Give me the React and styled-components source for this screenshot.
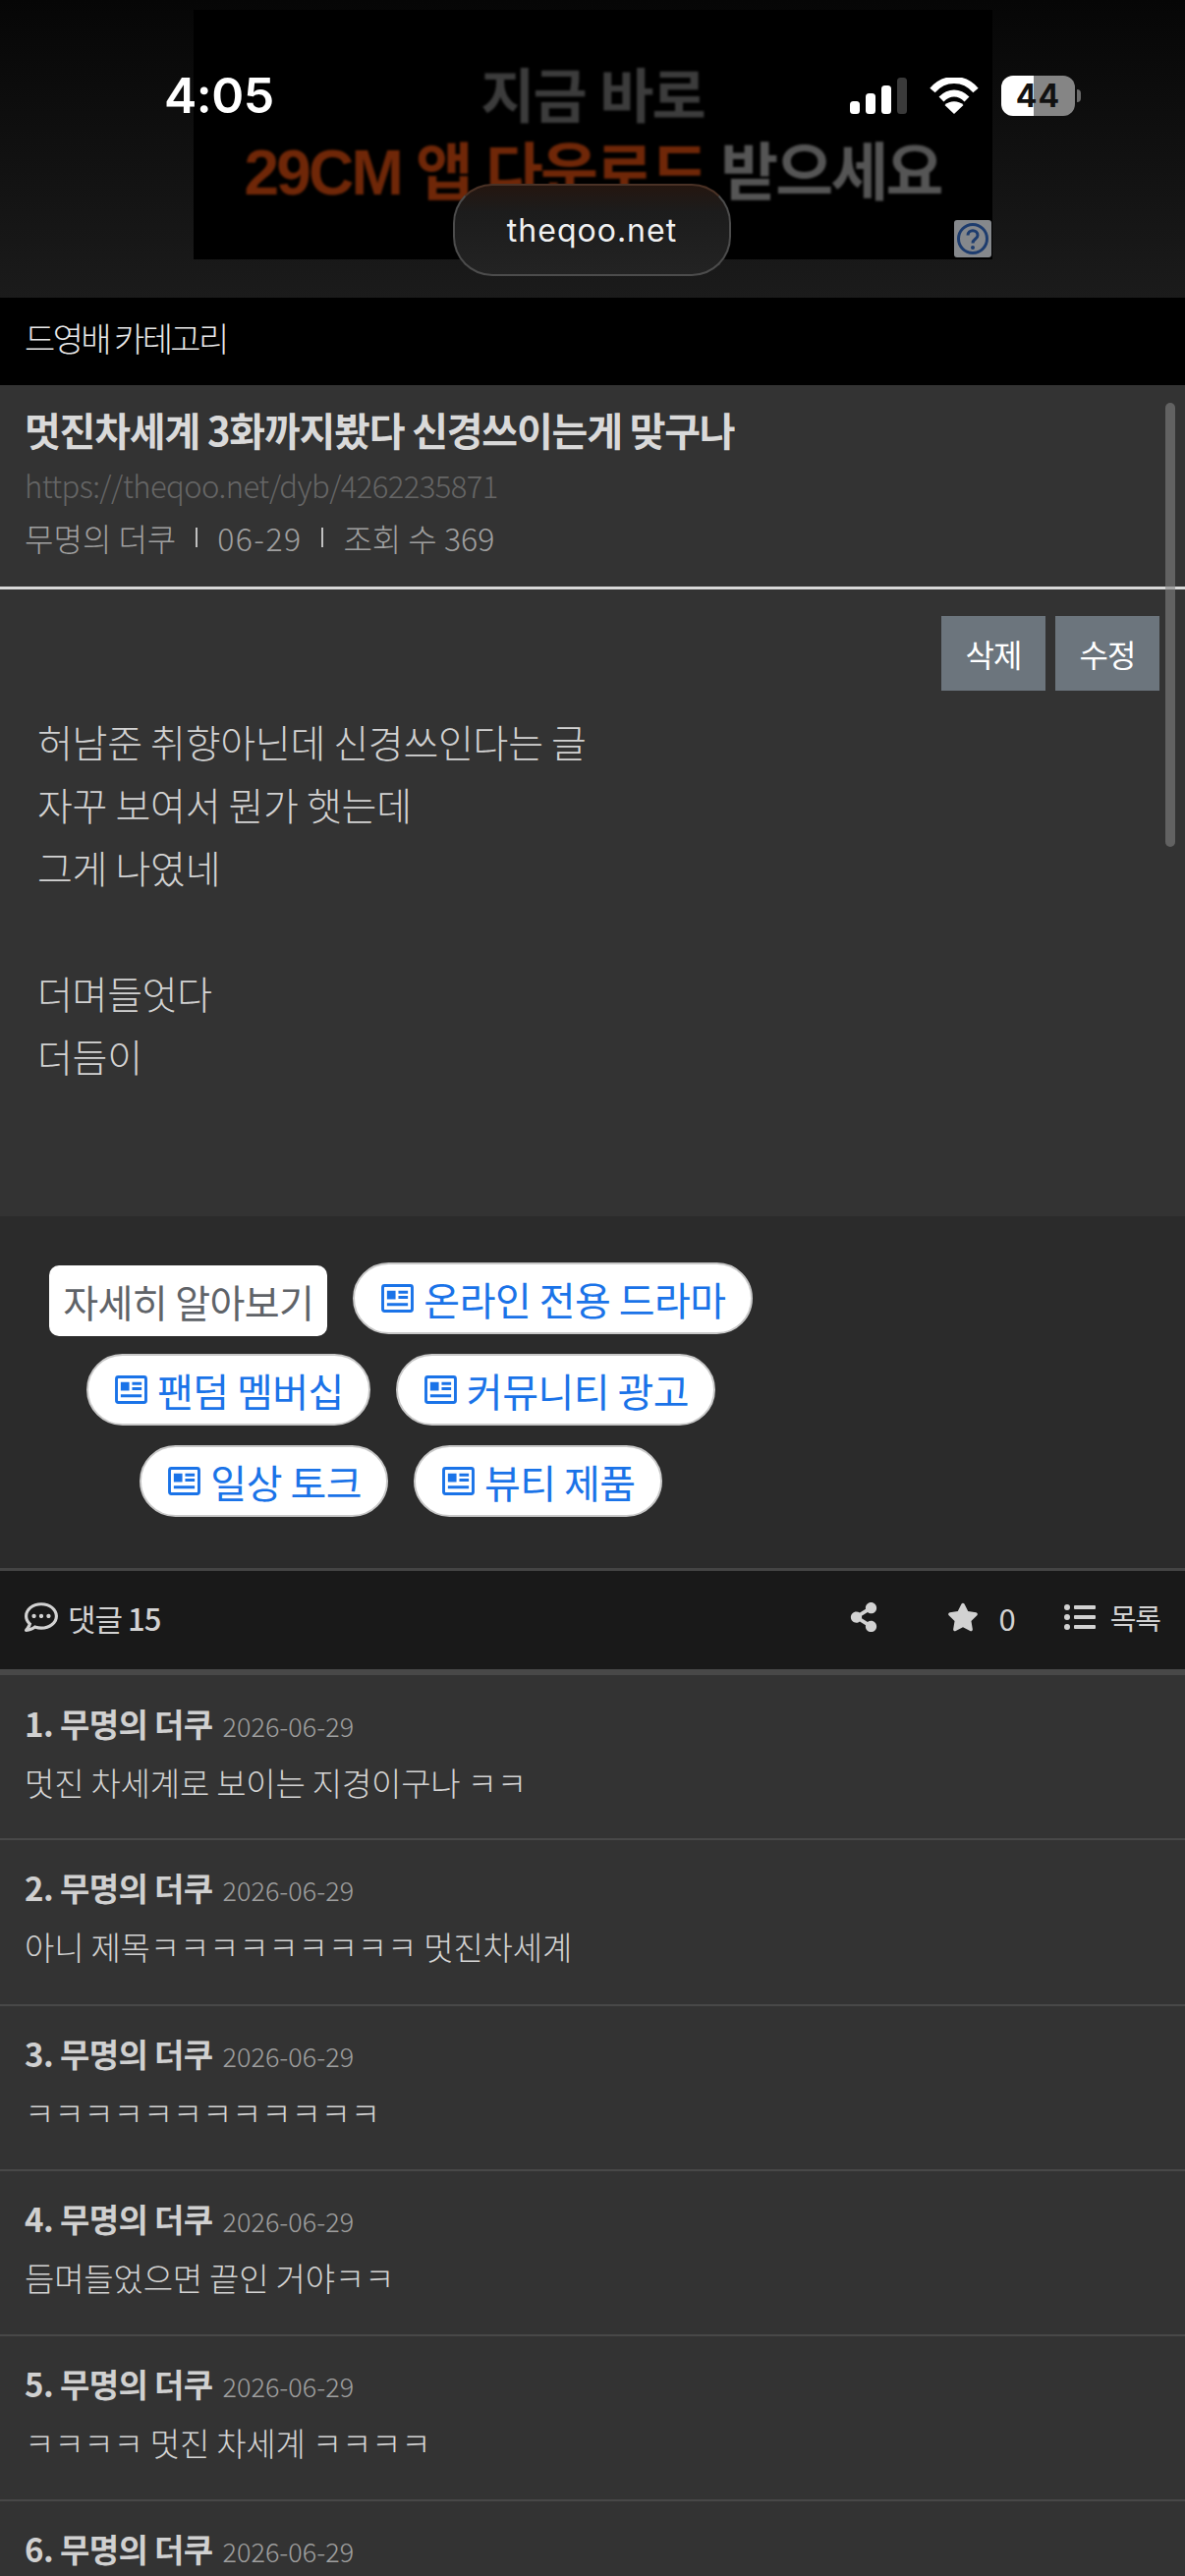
import styled, { createGlobalStyle } from "styled-components";
import { FaRegCommentDots, FaShareAlt, FaStar, FaListUl } from "react-icons/fa";

const GlobalStyle = createGlobalStyle`
  html, body {
    margin: 0;
    padding: 0;
    background: #333;
  }
  body {
    font-family: "Noto Sans CJK KR", "Noto Sans", sans-serif;
  }
`;

const Page = styled.div`
  position: relative;
  width: 1206px;
  height: 2622px;
  overflow: hidden;
  background: #333;
  color: #d6d6d6;
`;

const AdArea = styled.div`
  height: 303px;
  box-sizing: border-box;
  padding-top: 10px;
  display: flex;
  justify-content: center;
  background: linear-gradient(#060606, #1b1b1b);
`;

const Ad = styled.div`
  position: relative;
  width: 813px;
  height: 254px;
  box-sizing: border-box;
  padding-top: 52px;
  background: #000;
  text-align: center;
  font-family: "Liberation Sans", "Noto Sans CJK KR", sans-serif;
  font-weight: 700;
  line-height: 76px;
  color: #3c3c3c;
`;

const AdLine = styled.div`
  font-size: ${(p) => p.$size}px;
  letter-spacing: ${(p) => p.$spacing}px;
  filter: blur(0.8px);
`;

const AdAccent = styled.span`
  color: #6f2708;
`;

const AdGray = styled.span`
  color: #555;
`;

const AdHelp = styled.div`
  position: absolute;
  right: 1px;
  bottom: 2px;
  width: 38px;
  height: 38px;
  display: flex;
  align-items: center;
  justify-content: center;
  background: #85888c;
  border-radius: 3px;
`;

const StatusBar = styled.div`
  position: absolute;
  top: 0;
  left: 0;
  width: 100%;
  height: 130px;
`;

const Clock = styled.div`
  position: absolute;
  left: 167px;
  top: 67px;
  font-family: Inter, "Liberation Sans", sans-serif;
  font-size: 50px;
  line-height: 60px;
  font-weight: 600;
  letter-spacing: -0.5px;
  color: #fff;
`;

const StatusIcons = styled.div`
  position: absolute;
  left: 865px;
  top: 77px;
  display: flex;
  align-items: center;
  gap: 23px;
  height: 41px;
`;

const Battery = styled.div`
  position: relative;
  width: 75px;
  height: 41px;
  border-radius: 12px;
  overflow: hidden;
  display: flex;
  align-items: center;
  justify-content: center;
  background: linear-gradient(90deg, #fff 44%, #858585 44%);
  font-family: Inter, "Liberation Sans", sans-serif;
  font-size: 32px;
  font-weight: 700;
  letter-spacing: 1px;
  color: #111;
`;

const BatteryTip = styled.div`
  position: absolute;
  left: 1096px;
  top: 91px;
  width: 4px;
  height: 13px;
  border-radius: 0 4px 4px 0;
  background: #6a6a6a;
`;

const UrlPill = styled.div`
  position: absolute;
  left: 461px;
  top: 187px;
  width: 283px;
  height: 94px;
  box-sizing: border-box;
  display: flex;
  align-items: center;
  justify-content: center;
  border-radius: 40px;
  border: 2px solid #4c4c4c;
  border-top-color: #4a3226;
  background: linear-gradient(#241610, #1c1c1c 30%, #232323);
  font-family: Inter, "Liberation Sans", sans-serif;
  font-size: 32px;
  letter-spacing: 1px;
  color: #f0f0f0;
`;

const CategoryBar = styled.div`
  height: 89px;
  box-sizing: border-box;
  padding: 0 0 8px 25px;
  display: flex;
  align-items: center;
  background: #000;
  font-size: 34px;
  font-weight: 300;
  letter-spacing: -2.6px;
  color: #e8e8e8;
`;

const PostHeader = styled.header`
  height: 208px;
  box-sizing: border-box;
  padding: 16px 25px 0;
  border-bottom: 3px solid #d8d8d8;
`;

const PostTitle = styled.h1`
  margin: 0;
  font-size: 40px;
  line-height: 58px;
  font-weight: 700;
  letter-spacing: -1.2px;
  color: #d9d9d9;
`;

const PostUrl = styled.div`
  font-size: 31px;
  font-weight: 300;
  line-height: 56px;
  letter-spacing: -0.6px;
  color: #666;
`;

const PostMeta = styled.div`
  display: flex;
  align-items: center;
  font-size: 32px;
  font-weight: 300;
  line-height: 50px;
  letter-spacing: 0;
  color: #a0a0a0;
`;

const MetaNumber = styled.span`
  letter-spacing: 1.4px;
`;

const MetaDivider = styled.span`
  width: 2px;
  height: 20px;
  margin: 0 20px;
  background: #c0c0c0;
`;

const PostBody = styled.section`
  height: 638px;
  box-sizing: border-box;
  padding: 27px 26px 0 38px;
`;

const PostActions = styled.div`
  display: flex;
  justify-content: flex-end;
  gap: 10px;
  margin-bottom: 19px;
`;

const ActionButton = styled.div`
  width: 106px;
  height: 76px;
  display: flex;
  align-items: center;
  justify-content: center;
  background: #6c757d;
  font-size: 32px;
  letter-spacing: -1px;
  color: #fff;
`;

const BodyLine = styled.p`
  margin: 0;
  height: 64px;
  font-size: 39px;
  font-weight: 300;
  line-height: 64px;
  letter-spacing: -0.3px;
  color: #d2d2d2;
`;

const Recommend = styled.section`
  height: 358px;
  box-sizing: border-box;
  padding: 47px 390px 0 0;
  display: flex;
  flex-direction: column;
  row-gap: 20px;
  background: #2b2b2b;
`;

const ChipRow = styled.div`
  display: flex;
  justify-content: center;
  align-items: center;
  gap: 26px;
  height: 73px;
`;

const LabelChip = styled.div`
  width: 283px;
  height: 72px;
  margin-top: 5px;
  display: flex;
  align-items: center;
  justify-content: center;
  background: #fff;
  border-radius: 10px;
  font-size: 39px;
  letter-spacing: -0.6px;
  color: #5f6368;
`;

const LinkChip = styled.div`
  height: 73px;
  box-sizing: border-box;
  padding: 0 25px 0 27px;
  display: flex;
  align-items: center;
  gap: 10px;
  background: #fff;
  border: 2px solid #c8c8c8;
  border-radius: 37px;
  font-size: 40px;
  letter-spacing: -0.5px;
  color: #1a73e8;
`;

const ToolBar = styled.div`
  height: 103px;
  box-sizing: border-box;
  padding: 0 25px 6px;
  display: flex;
  align-items: center;
  justify-content: space-between;
  border-top: 3px solid #444;
  background: #191919;
  font-size: 31px;
  color: #d2d2d2;
`;

const ToolGroup = styled.div`
  display: flex;
  align-items: center;
`;

const ToolItem = styled.div`
  display: flex;
  align-items: center;
  gap: ${(p) => p.$gap || 10}px;
  margin-right: ${(p) => p.$after || 0}px;
  font-size: ${(p) => p.$size || 31}px;
  letter-spacing: -1px;
`;

const CommentCount = styled.strong`
  font-weight: 500;
`;

const CommentRow = styled.article`
  height: ${(p) => (p.$first ? 172.4 : 168.2)}px;
  box-sizing: border-box;
  padding: ${(p) => (p.$first ? 23 : 22)}px 25px 0;
  border-top: ${(p) => (p.$first ? "6px solid #484848" : "2px solid #484848")};
`;

const CommentHead = styled.div`
  display: flex;
  align-items: baseline;
  gap: 10px;
  height: 52px;
  line-height: 52px;
`;

const CommentAuthor = styled.span`
  font-size: 33px;
  font-weight: 700;
  letter-spacing: -0.6px;
  color: #d0d0d0;
`;

const CommentDate = styled.span`
  font-size: 27px;
  font-weight: 300;
  color: #a0a0a0;
`;

const CommentText = styled.div`
  margin-top: 10px;
  font-size: 33px;
  font-weight: 300;
  line-height: 48px;
  letter-spacing: -0.2px;
  color: #d4d4d4;
`;

const Scrollbar = styled.div`
  position: absolute;
  left: 1186px;
  top: 410px;
  width: 10px;
  height: 452px;
  border-radius: 5px;
  background: rgba(130, 130, 130, 0.6);
`;

const comments = [
  "멋진 차세계로 보이는 지경이구나 ㅋㅋ",
  "아니 제목ㅋㅋㅋㅋㅋㅋㅋㅋㅋ 멋진차세계",
  "ㅋㅋㅋㅋㅋㅋㅋㅋㅋㅋㅋㅋ",
  "듬며들었으면 끝인 거야ㅋㅋ",
  "ㅋㅋㅋㅋ 멋진 차세계 ㅋㅋㅋㅋ",
  "",
];

const linkRows = [
  ["팬덤 멤버십", "커뮤니티 광고"],
  ["일상 토크", "뷰티 제품"],
];

const NewsIcon = () => (
  <svg width="33" height="29" viewBox="0 0 34 30" fill="none">
    <rect x="1.5" y="1.5" width="31" height="27" rx="2" stroke="#1a73e8" strokeWidth="3" />
    <rect x="6" y="7" width="9" height="9" fill="#1a73e8" />
    <path d="M18 8.5h10M18 14h10M6 21.5h22" stroke="#1a73e8" strokeWidth="3" />
  </svg>
);

const SignalIcon = () => (
  <svg width="58" height="38" viewBox="0 0 58 38">
    <rect x="0" y="24" width="10" height="13" rx="3.5" fill="#fff" />
    <rect x="16" y="16" width="10" height="21" rx="3.5" fill="#fff" />
    <rect x="32" y="8" width="10" height="29" rx="3.5" fill="#fff" />
    <rect x="48" y="0" width="10" height="37" rx="3.5" fill="#3a3a3a" />
  </svg>
);

const WifiIcon = () => (
  <svg width="50" height="38" viewBox="0 0 50 38" fill="none">
    <path d="M3 13C15-1 35-1 47 13" stroke="#fff" strokeWidth="7" />
    <path d="M12 22c8-8 18-8 26 0" stroke="#fff" strokeWidth="7" />
    <path d="M25 37l-9.500-9c5-5 14-5 19 0z" fill="#fff" />
  </svg>
);

const HelpIcon = () => (
  <svg width="34" height="34" viewBox="0 0 34 34" fill="none">
    <circle cx="17" cy="17" r="14.500" stroke="#1d3c6e" strokeWidth="3" />
    <path d="M12 13.500c0-6.500 10-6.500 10 0 0 4-5 3.500-5 8" stroke="#1d3c6e" strokeWidth="3" />
    <circle cx="17" cy="26" r="2" fill="#1d3c6e" />
  </svg>
);

const App = () => {
  return (
    <Page>
      <GlobalStyle />
      <AdArea>
        <Ad>
          <AdLine $size={60} $spacing={-2}>지금 바로</AdLine>
          <AdLine $size={64} $spacing={-2.8}>
            <AdAccent>29CM 앱 다운로드</AdAccent> <AdGray>받으세요</AdGray>
          </AdLine>
          <AdHelp>
            <HelpIcon />
          </AdHelp>
        </Ad>
      </AdArea>
      <CategoryBar>드영배 카테고리</CategoryBar>
      <PostHeader>
        <PostTitle>멋진차세계 3화까지봤다 신경쓰이는게 맞구나</PostTitle>
        <PostUrl>https://theqoo.net/dyb/4262235871</PostUrl>
        <PostMeta>
          무명의 더쿠
          <MetaDivider />
          <MetaNumber>06-29</MetaNumber>
          <MetaDivider />
          조회 수 369
        </PostMeta>
      </PostHeader>
      <PostBody>
        <PostActions>
          <ActionButton>삭제</ActionButton>
          <ActionButton>수정</ActionButton>
        </PostActions>
        <BodyLine>허남준 취향아닌데 신경쓰인다는 글</BodyLine>
        <BodyLine>자꾸 보여서 뭔가 햇는데</BodyLine>
        <BodyLine>그게 나였네</BodyLine>
        <BodyLine />
        <BodyLine>더며들엇다</BodyLine>
        <BodyLine>더듬이</BodyLine>
      </PostBody>
      <Recommend>
        <ChipRow>
          <LabelChip>자세히 알아보기</LabelChip>
          <LinkChip>
            <NewsIcon />
            온라인 전용 드라마
          </LinkChip>
        </ChipRow>
        {linkRows.map((row) => (
          <ChipRow key={row[0]}>
            {row.map((label) => (
              <LinkChip key={label}>
                <NewsIcon />
                {label}
              </LinkChip>
            ))}
          </ChipRow>
        ))}
      </Recommend>
      <ToolBar>
        <ToolItem>
          <FaRegCommentDots size={34} />
          <span>
            댓글 <CommentCount>15</CommentCount>
          </span>
        </ToolItem>
        <ToolGroup>
          <ToolItem $after={70}>
            <FaShareAlt size={30} />
          </ToolItem>
          <ToolItem $gap={20} $after={50}>
            <FaStar size={32} />
            0
          </ToolItem>
          <ToolItem $gap={15} $size={29}>
            <FaListUl size={32} />
            목록
          </ToolItem>
        </ToolGroup>
      </ToolBar>
      {comments.map((text, i) => (
        <CommentRow key={i} $first={i === 0}>
          <CommentHead>
            <CommentAuthor>{i + 1}. 무명의 더쿠</CommentAuthor>
            <CommentDate>2026-06-29</CommentDate>
          </CommentHead>
          {text && <CommentText>{text}</CommentText>}
        </CommentRow>
      ))}
      <StatusBar>
        <Clock>4:05</Clock>
        <StatusIcons>
          <SignalIcon />
          <WifiIcon />
          <Battery>44</Battery>
        </StatusIcons>
        <BatteryTip />
      </StatusBar>
      <UrlPill>theqoo.net</UrlPill>
      <Scrollbar />
    </Page>
  );
};

export default App;
